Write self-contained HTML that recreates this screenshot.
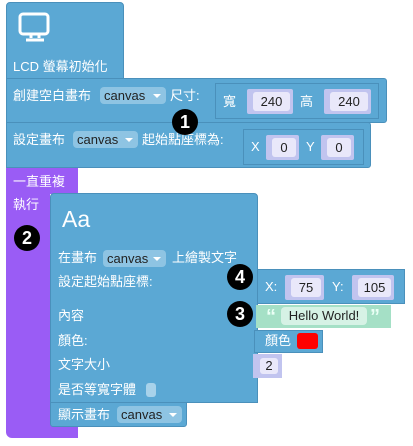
<!DOCTYPE html>
<html><head><meta charset="utf-8"><style>
body{margin:0;width:413px;height:446px;background:#fff;position:relative;overflow:hidden;font-family:"Liberation Sans","Noto Sans CJK TC",sans-serif;}
.a{position:absolute;box-sizing:border-box}
.b{background:#5ba8d4;border:1px solid #4a90bb;}
.p{background:#9a5cf5;}
.t{position:absolute;color:#fff;font-size:13px;line-height:14px;white-space:nowrap}
.dd{position:absolute;background:#8ec4e3;border-radius:4px;color:#222;font-size:13px;height:17px;line-height:17px;padding-left:4px;box-sizing:border-box}
.dd:after{content:"";position:absolute;right:5px;top:7px;border:4px solid transparent;border-top:4px solid #fff}
.in{position:absolute;background:#c1c4ef;border-radius:2px;box-sizing:border-box}
.in span{position:absolute;left:6px;right:3px;top:3px;bottom:3px;background:#e9e8fa;border-radius:3px;color:#222;font-size:13px;text-align:center;line-height:19px}
.bd{position:absolute;width:26px;height:26px;border-radius:50%;background:#000;color:#fff;font-weight:bold;font-size:18px;text-align:center;line-height:26px;font-family:"Liberation Sans",sans-serif}
</style></head><body>
<div class="a p" style="left:6px;top:168px;width:72px;height:26px"></div>
<div class="a p" style="left:6px;top:190px;width:44px;height:243px;border-radius:0 0 0 6px"></div>
<div class="a p" style="left:6px;top:420px;width:72px;height:18px;border-radius:0 0 0 6px"></div>
<div class="t" style="left:13px;top:175px">一直重複</div>
<div class="t" style="left:13px;top:198px">執行</div>

<div class="a b" style="left:6px;top:2px;width:118px;height:78px;border-radius:4px 4px 0 0"></div>
<svg class="a" style="left:18px;top:12px" width="34" height="32" viewBox="0 0 34 32"><rect x="2" y="2" width="28" height="20" rx="3" fill="none" stroke="#fff" stroke-width="3"/><path d="M13 22v4M21 22v4M8 28h18" stroke="#fff" stroke-width="3" fill="none"/></svg>
<div class="t" style="left:13px;top:60px">LCD 螢幕初始化</div>

<div class="a b" style="left:6px;top:78px;width:381px;height:45px;border-radius:0 3px 3px 0"></div>
<div class="t" style="left:13px;top:89px">創建空白畫布</div>
<div class="dd" style="left:100px;top:87px;width:66px">canvas</div>
<div class="t" style="left:170px;top:89px">尺寸:</div>
<div class="a" style="left:215px;top:83px;width:164px;height:36px;border:1px solid #4a90bb"></div>
<div class="t" style="left:223px;top:95px">寬</div>
<div class="in" style="left:247px;top:89px;width:46px;height:25px"><span>240</span></div>
<div class="t" style="left:300px;top:95px">高</div>
<div class="in" style="left:324px;top:89px;width:47px;height:25px"><span>240</span></div>

<div class="a b" style="left:6px;top:122px;width:365px;height:46px;border-radius:0 3px 3px 0"></div>
<div class="t" style="left:13px;top:133px">設定畫布</div>
<div class="dd" style="left:73px;top:131px;width:65px">canvas</div>
<div class="t" style="left:142px;top:133px">起始點座標為:</div>
<div class="a" style="left:243px;top:129px;width:121px;height:36px;border:1px solid #4a90bb"></div>
<div class="t" style="left:251px;top:140px">X</div>
<div class="in" style="left:266px;top:135px;width:33px;height:25px"><span>0</span></div>
<div class="t" style="left:306px;top:140px">Y</div>
<div class="in" style="left:321px;top:135px;width:33px;height:25px"><span>0</span></div>
<div class="bd" style="left:172px;top:109px">1</div>

<div class="a b" style="left:50px;top:193px;width:208px;height:210px;border-radius:4px 4px 0 0"></div>
<div class="t" style="left:62px;top:206px;font-size:23px;line-height:26px">Aa</div>
<div class="bd" style="left:14px;top:225px">2</div>
<div class="t" style="left:58px;top:251px">在畫布</div>
<div class="dd" style="left:103px;top:250px;width:63px">canvas</div>
<div class="t" style="left:172px;top:251px">上繪製文字</div>
<div class="t" style="left:58px;top:275px">設定起始點座標:</div>
<div class="t" style="left:58px;top:309px">內容</div>
<div class="t" style="left:58px;top:334px">顏色:</div>
<div class="t" style="left:58px;top:358px">文字大小</div>
<div class="t" style="left:58px;top:383px">是否等寬字體</div>
<div class="a" style="left:146px;top:383px;width:10px;height:14px;background:#a8d2ea;border-radius:3px"></div>

<div class="a b" style="left:257px;top:269px;width:148px;height:35px"></div>
<div class="t" style="left:265px;top:280px">X:</div>
<div class="in" style="left:285px;top:275px;width:39px;height:25px"><span>75</span></div>
<div class="t" style="left:332px;top:280px">Y:</div>
<div class="in" style="left:352px;top:275px;width:42px;height:25px"><span>105</span></div>
<div class="bd" style="left:227px;top:264px">4</div>

<div class="a" style="left:256px;top:305px;width:135px;height:23px;background:#a5e0c6"></div>
<div class="t" style="left:266px;top:307px;color:#eafff5;font-size:20px;line-height:20px;font-weight:bold">“</div>
<div class="a" style="left:281px;top:307px;width:86px;height:18px;background:#d6f2e5;border-radius:4px;color:#222;font-size:13px;text-align:center;line-height:18px">Hello World!</div>
<div class="t" style="left:370px;top:307px;color:#eafff5;font-size:20px;line-height:20px;font-weight:bold">”</div>
<div class="bd" style="left:227px;top:301px">3</div>

<div class="a b" style="left:254px;top:330px;width:69px;height:23px"></div>
<div class="t" style="left:265px;top:334px">顏色</div>
<div class="a" style="left:297px;top:333px;width:21px;height:16px;background:#f00;border-radius:3px"></div>

<div class="a" style="left:253px;top:354px;width:29px;height:24px;background:#c1c4ef"></div>
<div class="a" style="left:260px;top:358px;width:18px;height:16px;background:#e9e8fa;border-radius:3px;color:#222;font-size:13px;text-align:center;line-height:16px">2</div>

<div class="a b" style="left:50px;top:402px;width:137px;height:25px;border-radius:0 0 3px 3px"></div>
<div class="t" style="left:58px;top:408px">顯示畫布</div>
<div class="dd" style="left:117px;top:406px;width:65px">canvas</div>
</body></html>
